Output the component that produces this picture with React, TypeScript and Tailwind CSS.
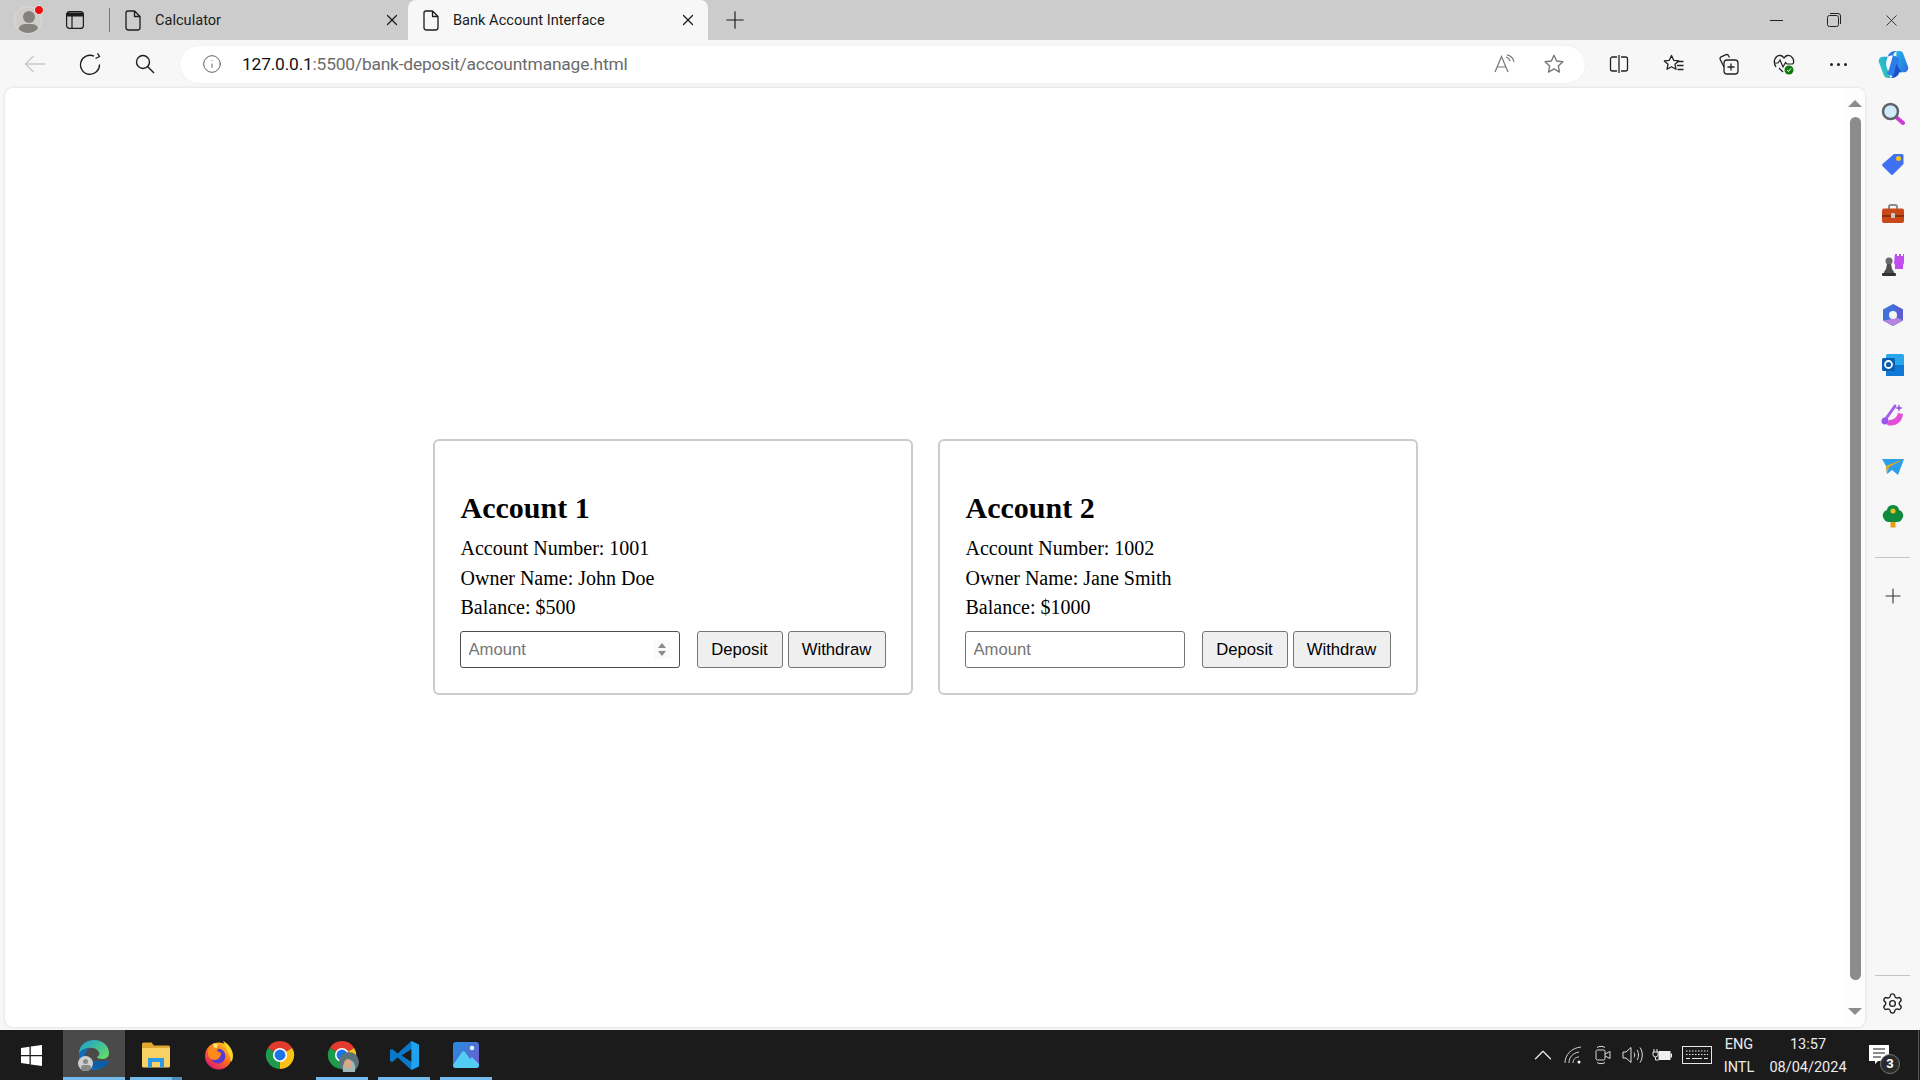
import { ChevronUp, Info, Plus, Settings, X } from 'lucide-react'
import type { ReactNode } from 'react'

const uiFont = 'font-["Roboto","Noto_Sans",sans-serif]'

function PageIcon() {
  return (
    <svg width="16" height="21" viewBox="0 0 16 21" fill="none" stroke="#1c1c1c" strokeWidth="1.3">
      <path d="M3 1h6.500L15 6.500V17.500a2.500 2.500 0 0 1-2.500 2.500h-9A2.500 2.500 0 0 1 1 17.500V3a2 2 0 0 1 2-2zM9.500 1v5.500H15" strokeLinejoin="round" />
    </svg>
  )
}

function Avatar() {
  return (
    <div className="relative h-[28px] w-[28px] overflow-hidden rounded-full border border-[#dedcd8] bg-[#cfcdc9]">
      <div className="absolute left-[7.500px] top-[4px] h-[12px] w-[12px] rounded-full bg-[#85827e]" />
      <div className="absolute left-[3px] top-[17px] h-[14px] w-[21px] rounded-full bg-[#85827e]" />
    </div>
  )
}

function TitleBar() {
  return (
    <div className={`flex h-10 shrink-0 items-stretch bg-[#cccccc] text-[14.600px] text-[#1c1c1c] ${uiFont}`}>
      <div className="relative flex w-[56px] items-center justify-center">
        <Avatar />
        <div className="absolute left-[34px] top-[5px] h-[10px] w-[10px] rounded-full border border-[#e8e8e8] bg-[#e81010]" />
      </div>
      <div className="flex w-[38px] items-center justify-center">
        <svg width="18" height="18" viewBox="0 0 18 18" fill="none" stroke="#1c1c1c" strokeWidth="1.200">
          <rect x="0.600" y="0.600" width="16.800" height="16.800" rx="3" />
          <path d="M1 3.500h16" strokeWidth="4" />
          <path d="M6 5v12.500" />
        </svg>
      </div>
      <div className="my-[8px] ml-[15px] w-px bg-[#777]" />
      <div className="flex w-[298px] items-center pl-[15px]">
        <PageIcon />
        <span className="ml-[14px] flex-1 pt-[1px]">Calculator</span>
        <X size={18} strokeWidth={1.600} className="mr-[7px] text-[#1c1c1c]" />
      </div>
      <div className="flex w-[300px] items-center rounded-t-lg bg-[#f7f7f7] pl-[15px]">
        <PageIcon />
        <span className="ml-[14px] flex-1 pt-[1px]">Bank Account Interface</span>
        <X size={18} strokeWidth={1.600} className="mr-[11px] text-[#1c1c1c]" />
      </div>
      <div className="flex w-[54px] items-center justify-center">
        <Plus size={28} strokeWidth={1} className="text-[#1c1c1c]" />
      </div>
      <div className="ml-auto flex items-center">
        <div className="flex w-[56px] justify-center pr-[2px]">
          <div className="h-px w-[13px] bg-[#222]" />
        </div>
        <div className="flex w-[57px] justify-center">
          <svg width="14" height="14" viewBox="0 0 14 14" fill="none" stroke="#222" strokeWidth="1">
            <rect x="0.500" y="2.500" width="11" height="11" rx="2" />
            <path d="M3 .5h8a2.500 2.500 0 0 1 2.500 2.500v8" />
          </svg>
        </div>
        <div className="flex w-[58px] justify-center">
          <X size={19} strokeWidth={1.100} className="text-[#222]" />
        </div>
      </div>
    </div>
  )
}

function ToolButton({ children }: { children: ReactNode }) {
  return <div className="flex w-[55px] shrink-0 items-center justify-center">{children}</div>
}

function Toolbar() {
  return (
    <div className={`flex h-12 shrink-0 items-center bg-[#f7f7f7] pl-[7px] ${uiFont}`}>
      <div className="flex h-full w-[165px] items-stretch">
        <div className="flex w-[55px] items-center justify-center">
          <svg width="22" height="18" viewBox="0 0 22 18" fill="none" stroke="#c8c8c8" strokeWidth="1.300">
            <path d="M21 9H1.500M9.500 1l-8 8 8 8" />
          </svg>
        </div>
        <div className="flex w-[55px] items-center justify-center">
          <svg width="22" height="22" viewBox="0 0 22 22" fill="none" stroke="#1c1c1c" strokeWidth="1.300">
            <path d="M15 3.200A9.500 9.500 0 1 0 20.500 11.500" />
            <path d="M14 .8 16 4l-4 2" transform="translate(4.500 -0.500)" />
          </svg>
        </div>
        <div className="flex w-[55px] items-center justify-center">
          <svg width="20" height="20" viewBox="0 0 20 20" fill="none" stroke="#1c1c1c" strokeWidth="1.400">
            <circle cx="8" cy="8" r="6.500" />
            <path d="m12.500 12.500 6.500 6.500" />
          </svg>
        </div>
      </div>
      <div className="ml-2 flex h-[37px] flex-1 items-center rounded-full bg-white pl-[22px] pr-[20px] shadow-[0_0_2px_rgba(0,0,0,0.08)]">
        <Info size={20} strokeWidth={1.100} className="text-[#555]" />
        <span className="ml-[20px] pt-[1px] text-[17.400px] tracking-[-0.2px] text-[#6b6b6b]">
          <span className="text-[#111]">127.0.0.1</span>:5500/bank-deposit/accountmanage.html
        </span>
        <div className="ml-auto flex items-center gap-[27px]">
          <svg width="22" height="20" viewBox="0 0 22 20" fill="none" stroke="#767676" strokeWidth="1.200">
            <path d="M1 18 7.500 2.500 14 18M3.300 13h8.400" />
            <path d="M12 3a6 6 0 0 1 4 4M13 .8a9 9 0 0 1 7 7" />
          </svg>
          <svg width="22" height="22" viewBox="0 0 24 24" fill="none" stroke="#767676" strokeWidth="1.500" strokeLinejoin="round">
            <path d="m12 2.500 2.900 6.200 6.800.8-5 4.600 1.300 6.700-6-3.400-6 3.400 1.300-6.700-5-4.600 6.800-.8z" />
          </svg>
        </div>
      </div>
      <div className="ml-[6px] flex h-full w-[329px] shrink-0 items-stretch">
        <ToolButton>
          <svg width="20" height="20" viewBox="0 0 20 20" fill="none" stroke="#222" strokeWidth="1.300">
            <path d="M8 3H3.500A2 2 0 0 0 1.500 5v10a2 2 0 0 0 2 2H8M12 3h4.500a2 2 0 0 1 2 2v10a2 2 0 0 1-2 2H12M10 1v18" />
          </svg>
        </ToolButton>
        <ToolButton>
          <svg width="22" height="22" viewBox="0 0 22 22" fill="none" stroke="#222" strokeWidth="1.300" strokeLinejoin="round">
            <path d="m8.500 2.500 2.200 4.800 5 .6-3.700 3.400 1 5-4.500-2.500-4.500 2.500 1-5L1.300 7.900l5-.6z" />
            <path d="M14 8.500h6.500M14 12.500h6.500M14.500 16.500h6" />
          </svg>
        </ToolButton>
        <ToolButton>
          <svg width="22" height="22" viewBox="0 0 22 22" fill="none" stroke="#222" strokeWidth="1.300" strokeLinejoin="round">
            <path d="M6 14 2.200 6.500a2 2 0 0 1 1-2.700L8 1.700a2 2 0 0 1 2.600 1l.9 1.800" />
            <rect x="6" y="7" width="14" height="14" rx="3" />
            <path d="M13 10.500v7M9.500 14h7" />
          </svg>
        </ToolButton>
        <ToolButton>
          <svg width="22" height="22" viewBox="0 0 22 22" fill="none">
            <path d="M3 14C-1 8 3 2 7.500 2.500 9 2.700 10 3.500 11 5c1-1.500 2-2.300 3.500-2.500C19 2 22 7 20 11" stroke="#222" strokeWidth="1.300" />
            <path d="M1 10h4l2-3 3 7 2.500-4.500 1.500 1.500h6M6 15l4 4" stroke="#222" strokeWidth="1.200" />
            <circle cx="16" cy="17" r="4.500" fill="#107c10" />
            <path d="m14 17 1.500 1.500 2.500-3" stroke="white" strokeWidth="1" />
          </svg>
        </ToolButton>
        <ToolButton>
          <div className="flex gap-[4px]">
            <div className="h-[3px] w-[3px] rounded-full bg-[#222]" />
            <div className="h-[3px] w-[3px] rounded-full bg-[#222]" />
            <div className="h-[3px] w-[3px] rounded-full bg-[#222]" />
          </div>
        </ToolButton>
        <ToolButton>
          <svg width="31" height="27" viewBox="0 0 32 28">
            <defs>
              <linearGradient id="cpA" x1="0" y1="0" x2="1" y2="1">
                <stop offset="0" stopColor="#1fb6e8" />
                <stop offset="1" stopColor="#2f6be0" />
              </linearGradient>
              <linearGradient id="cpB" x1="0" y1="1" x2="1" y2="0">
                <stop offset="0" stopColor="#37d6a8" />
                <stop offset="1" stopColor="#1f9fe8" />
              </linearGradient>
            </defs>
            <path d="M19 0h3c2 0 3.500 1 4.200 3L31 16c1 3-1 6-4 6h-5l-3-13z" fill="url(#cpA)" />
            <path d="M13 28h-3c-2 0-3.500-1-4.200-3L1 12C0 9 2 6 5 6h5c-2 5-2 8-1 11z" fill="url(#cpB)" />
            <path d="M10 6c1-4 4-6 9-6-2 1-3 3-4 6l-3 11c-.8 3-2 5-3 6 4 3 9 5 10-1l3-13C21 5 14 3 10 6z" fill="#2c7de6" />
            <path d="M22 22c-1 4-4 6-9 6 2-1 3-3 4-6l2-9 5 9z" fill="#1c50c8" />
          </svg>
        </ToolButton>
      </div>
    </div>
  )
}

function Spinner() {
  return (
    <div className="absolute right-[9px] top-[9px] flex h-[19px] w-[17px] flex-col items-center justify-center gap-[3px] bg-[#fafafa]">
      <div className="h-0 w-0 border-x-[4px] border-b-[5px] border-x-transparent border-b-[#8a8a8a]" />
      <div className="h-0 w-0 border-x-[4px] border-t-[5px] border-x-transparent border-t-[#8a8a8a]" />
    </div>
  )
}

interface AccountCardProps {
  title: string
  number: string
  owner: string
  balance: string
  focused?: boolean
}

function AccountCard({ title, number, owner, balance, focused }: AccountCardProps) {
  return (
    <div className="w-[480px] rounded-[6px] border-2 border-[#cccccc] p-[25px] font-['Liberation_Serif',serif] text-black">
      <h2 className="mb-[12px] ml-[1px] mt-[25px] text-[30px] font-bold leading-[34px]">{title}</h2>
      <p className="ml-[1px] text-[20px] leading-[23px]">Account Number: {number}</p>
      <p className="ml-[1px] mt-[7px] text-[20px] leading-[23px]">Owner Name: {owner}</p>
      <p className="ml-[1px] mt-[6px] text-[20px] leading-[23px]">Balance: {balance}</p>
      <div className="mt-[12px] flex h-[37px] font-['Liberation_Sans',sans-serif] text-[16.670px]">
        <div className="relative w-[220px]">
          <input
            placeholder="Amount"
            className={`h-full w-full rounded-[3px] border px-[8px] pt-[1px] outline-none placeholder:text-[#757575] ${focused ? 'border-[#4f4f4f]' : 'border-[#767676]'}`}
          />
          {focused && <Spinner />}
        </div>
        <button type="button" className="ml-[17px] w-[86px] rounded-[3px] border border-[#767676] bg-[#efefef]">
          Deposit
        </button>
        <button type="button" className="ml-[5px] w-[98px] rounded-[3px] border border-[#767676] bg-[#efefef]">
          Withdraw
        </button>
      </div>
    </div>
  )
}

function Scrollbar() {
  return (
    <div className="flex w-[20px] shrink-0 flex-col items-center bg-[#fdfdfd] py-[12px]">
      <div className="h-0 w-0 border-x-[7px] border-b-[7px] border-x-transparent border-b-[#8c8c8c]" />
      <div className="mt-[10px] w-[11px] flex-1 rounded-full bg-[#8c8c8c]" />
      <div className="mt-[28px] h-0 w-0 border-x-[7px] border-t-[7px] border-x-transparent border-t-[#8c8c8c]" />
    </div>
  )
}

const sidebarIcons: ReactNode[] = [
  <svg key="search" width="24" height="24" viewBox="0 0 24 24">
    <path d="m15 15 7 6" stroke="#c93ad8" strokeWidth="4" strokeLinecap="round" />
    <circle cx="9.500" cy="9.500" r="7.500" fill="#cfeaf8" stroke="#5f6368" strokeWidth="2.500" />
  </svg>,
  <svg key="tag" width="24" height="24" viewBox="0 0 24 24">
    <path d="M13 2h8a1.500 1.500 0 0 1 1.500 1.500V12L12 22.500a1.500 1.500 0 0 1-2 0L1.500 14a1.500 1.500 0 0 1 0-2z" fill="#3f6ff2" />
    <circle cx="17.500" cy="6.500" r="2.500" fill="#f5c518" />
  </svg>,
  <svg key="toolbox" width="24" height="24" viewBox="0 0 24 24">
    <path d="M8 7V4.500A1.500 1.500 0 0 1 9.500 3h5A1.500 1.500 0 0 1 16 4.500V7" fill="none" stroke="#8d8d8d" strokeWidth="2" />
    <rect x="1" y="6.500" width="22" height="14.500" rx="2" fill="#c8481a" />
    <rect x="1" y="13" width="22" height="2" fill="#8f2f0e" />
    <rect x="10" y="11" width="4" height="5" rx="1" fill="#c9c9c9" />
  </svg>,
  <svg key="chess" width="24" height="24" viewBox="0 0 24 24">
    <path d="M14 1h2v2h2V1h2v2h2V1h1v9l-1 2v4h-8v-4l-1-2z" fill="#bf4df0" />
    <circle cx="8" cy="8" r="3.500" fill="#6a6a6a" />
    <path d="M6 11h4l1 5 2 3v2H3v-2l2-3z" fill="#4f4f4f" />
    <rect x="1" y="20" width="14" height="3" rx="1" fill="#333" />
  </svg>,
  <svg key="m365" width="24" height="24" viewBox="0 0 24 24">
    <path d="M12 1 22 6.500v11L12 23 2 17.500v-11z" fill="#3f72d8" />
    <path d="M12 1 22 6.500v11l-6-3.500V9z" fill="#5b5fd0" />
    <path d="M2 17.500 12 23l10-5.500-7-3.500-4 2z" fill="#b583e0" />
    <circle cx="12" cy="12" r="4" fill="#f7f7f7" />
  </svg>,
  <svg key="outlook" width="24" height="24" viewBox="0 0 24 24">
    <rect x="5" y="1" width="18" height="22" rx="1.500" fill="#28a8ea" />
    <path d="M5 12h18v11H5z" fill="#0f78d4" />
    <rect x="1" y="5" width="13" height="13" rx="1.500" fill="#0a5fb4" />
    <circle cx="7.500" cy="11.500" r="3.500" fill="none" stroke="white" strokeWidth="1.800" />
  </svg>,
  <svg key="designer" width="24" height="24" viewBox="0 0 24 24">
    <path d="M14 3 4 17" stroke="#a45cec" strokeWidth="3" strokeLinecap="round" />
    <path d="M6 22c8 2 15-2 16-11l-5-1c-1 4-4 7-9 7z" fill="#e04fd4" />
    <circle cx="4" cy="18" r="3.500" fill="#9a55ea" />
    <path d="m18 1 1 3 3 1-3 1-1 3-1-3-3-1 3-1z" fill="#9a4fe8" />
  </svg>,
  <svg key="send" width="24" height="24" viewBox="0 0 24 24">
    <path d="M1 6h22L17 22l-6-5-5 4-1-8z" fill="#2c9fe8" />
    <path d="M5 13 23 6 8 14l-2 7z" fill="#f0a818" />
  </svg>,
  <svg key="tree" width="24" height="24" viewBox="0 0 24 24">
    <rect x="9.500" y="16" width="5" height="7.500" fill="#e8a010" />
    <path d="M12 1c4 0 6 3 6 5 3 1 5 4 4 7-1 3-3 5-6 5H8c-3 0-5-2-6-5-1-3 1-6 4-7 0-2 2-5 6-5z" fill="#108a3c" />
    <circle cx="12" cy="7" r="2.500" fill="#f0c020" />
  </svg>,
]

function Sidebar() {
  return (
    <div className="flex w-[55px] shrink-0 flex-col items-center pt-[1px]">
      <div className="flex w-full flex-col items-center">
        {sidebarIcons.map((icon, i) => (
          <div key={i} className="flex h-[50.200px] w-full items-center justify-center">
            {icon}
          </div>
        ))}
      </div>
      <div className="mt-[16px] h-px w-[35px] bg-[#c4c4c4]" />
      <Plus size={24} strokeWidth={1.100} className="mt-[26px] text-[#333]" />
      <div className="mt-auto h-px w-[35px] bg-[#c4c4c4]" />
      <Settings size={23} strokeWidth={1.400} className="mb-[15px] mt-[16px] text-[#1c1c1c]" />
    </div>
  )
}

function EdgeIcon() {
  return (
    <div className="relative h-[32px] w-[32px]">
      <svg width="32" height="32" viewBox="0 0 32 32">
        <defs>
          <linearGradient id="edgeTop" x1="0" y1="0" x2="1" y2="0.800">
            <stop offset="0" stopColor="#1a9ad8" />
            <stop offset="1" stopColor="#62dc68" />
          </linearGradient>
        </defs>
        <path d="M1 15C1 6 8 1 16 1c9 0 15 6 15 13 0 4-3 6-7 6-3 0-5-1-5-2 2-1 3-3 2-5-2-4-7-5-11-4-5 1-8 3-9 6z" fill="url(#edgeTop)" />
        <path d="M1 15c1-3 4-5 9-6 1 0 2 0 2 0-4 2-6 6-5 10s5 8 10 10c3 1 6 0 9-2-3 3-7 4-10 4C7 31 1 24 1 15z" fill="#0f6cbd" />
        <path d="M17 29c-3-1-6-4-7-7h21c-1 4-6 9-14 7z" fill="#0b5fa8" />
      </svg>
      <div className="absolute bottom-0 left-0 h-[15px] w-[15px] overflow-hidden rounded-full bg-[#cfcfcf]">
        <div className="mx-auto mt-[3px] h-[5px] w-[5px] rounded-full bg-[#888]" />
        <div className="mx-auto mt-[1px] h-[6px] w-[10px] rounded-full bg-[#888]" />
      </div>
    </div>
  )
}

function FolderIcon() {
  return (
    <svg width="28" height="26" viewBox="0 0 28 26">
      <path d="M0 2A1.500 1.500 0 0 1 1.500 .5h8L12 3.500h14.500A1.500 1.500 0 0 1 28 5v3H0z" fill="#e0a82e" />
      <path d="M0 6h28v18a1.500 1.500 0 0 1-1.500 1.500h-25A1.500 1.500 0 0 1 0 24z" fill="#fad165" />
      <path d="M6 16h16v9.500h-4V20h-8v5.500H6z" fill="#2e9be8" />
    </svg>
  )
}

function FirefoxIcon() {
  return (
    <svg width="29" height="30" viewBox="0 0 29 30">
      <defs>
        <linearGradient id="ffA" x1="0.800" y1="0.100" x2="0.200" y2="0.900">
          <stop offset="0" stopColor="#ffc21e" />
          <stop offset="0.500" stopColor="#ff6a1f" />
          <stop offset="1" stopColor="#e0206a" />
        </linearGradient>
      </defs>
      <circle cx="14.500" cy="16" r="13.500" fill="url(#ffA)" />
      <path d="M19 1c6 3 10 9 10 15 0 2-.5 4-1.500 6-2-7-5-14-8.500-21z" fill="#ffd52e" />
      <circle cx="14" cy="16" r="7.500" fill="#5a3bd0" />
      <path d="M6 6c4-3 9-1 10 2-1 1-3 1-3 3l4 2c0 4-3 7-6 7-5 0-7-3-7-7 0-3 0-5 2-7z" fill="#ff8a1c" />
      <path d="M9 3.500 14 4l-1 4-3-.5z" fill="#ffe27a" />
    </svg>
  )
}

function ChromeIcon() {
  return (
    <svg width="30" height="30" viewBox="0 0 32 32">
      <path d="M16 16 3 8.500A15 15 0 0 1 29 8.500z" fill="#e33b2e" />
      <path d="M16 16 29 8.500A15 15 0 0 1 16 31z" fill="#fbc116" />
      <path d="M16 16 16 31A15 15 0 0 1 3 8.500z" fill="#1f9a4c" />
      <circle cx="16" cy="16" r="7.500" fill="white" />
      <circle cx="16" cy="16" r="5.800" fill="#1a73e8" />
    </svg>
  )
}

function ProfileChrome() {
  return (
    <div className="relative h-[30px] w-[30px]">
      <ChromeIcon />
      <svg width="20" height="20" viewBox="0 0 20 20" className="absolute -bottom-[2px] -right-[2px]">
        <circle cx="10" cy="10" r="10" fill="#5a7378" />
        <path d="M4 20c-1-7 1-12 6-12s7 5 6 12z" fill="#9fb8ba" />
        <ellipse cx="9" cy="12" rx="4" ry="5" fill="#d8a78c" />
      </svg>
    </div>
  )
}

function VscodeIcon() {
  return (
    <svg width="31" height="31" viewBox="0 0 32 32">
      <path d="M23 1 31 5v22l-8 4L9 18l-6 5-2-1.500V10.500L3 9l6 5z" fill="#0a78c8" />
      <path d="M23 1 31 5v22l-8 4z" fill="#20a2ee" />
      <path d="M23 9.500 13 16l10 6.500z" fill="#1c1c1c" />
    </svg>
  )
}

function PhotosIcon() {
  return (
    <svg width="26" height="26" viewBox="0 0 26 26">
      <defs>
        <linearGradient id="phA" x1="0" y1="0" x2="1" y2="1">
          <stop offset="0" stopColor="#1f8fe0" />
          <stop offset="1" stopColor="#7a55c8" />
        </linearGradient>
      </defs>
      <rect width="26" height="26" rx="3" fill="url(#phA)" />
      <circle cx="19" cy="6" r="2.200" fill="#eaf6ff" />
      <path d="M0 23 9 10c1-1 2-1 3 0l5 7 2-2 7 7v1a3 3 0 0 1-3 3H3a3 3 0 0 1-3-3z" fill="#52cdf5" />
    </svg>
  )
}

interface TaskTileProps {
  children: ReactNode
  running?: boolean
  active?: boolean
  stacked?: boolean
}

function TaskTile({ children, running, active, stacked }: TaskTileProps) {
  return (
    <div className={`flex w-[62px] flex-col ${active ? 'bg-[#4a4a4a]' : ''}`}>
      <div className="flex flex-1 items-center justify-center pt-[3px]">{children}</div>
      <div className={`flex h-[3px] justify-end ${active ? 'bg-[#76b9ed]' : running ? 'mx-[5px] bg-[#76b9ed]' : ''}`}>
        {stacked && <div className="w-[10px] bg-[#4c8dbe]" />}
      </div>
    </div>
  )
}

function TrayIcons() {
  return (
    <>
      <div className="flex w-[31px] justify-center">
        <ChevronUp size={30} strokeWidth={1} className="text-[#e8e8e8]" />
      </div>
      <div className="flex w-[30px] justify-center">
        <svg width="18" height="18" viewBox="0 0 18 18" fill="none" stroke="#cfcfcf" strokeWidth="1">
          <path d="M1 17C1 9 7 2 17 1M5 17c0-6 4-10 10-11M9 17c0-3 2-6 6-6" />
          <circle cx="15" cy="16" r="1.500" fill="white" stroke="none" />
        </svg>
      </div>
      <div className="flex w-[30px] justify-center">
        <svg width="16" height="20" viewBox="0 0 16 20" fill="none" stroke="#dcdcdc" strokeWidth="1">
          <rect x="1" y="5" width="9" height="10" rx="1.500" />
          <path d="m10 9 5-2.500v7L10 11M2 2.500c2-1.500 6-1.500 8 0M2 17.500c2 1.500 6 1.500 8 0" />
        </svg>
      </div>
      <div className="flex w-[29px] justify-center">
        <svg width="21" height="18" viewBox="0 0 21 18" fill="none" stroke="#e0e0e0" strokeWidth="1">
          <path d="M1 6h3l5-4.500v15L4 12H1zM12 6.500c1 1.500 1 3.500 0 5M15 4c2 3 2 7 0 10M18 1.500c3 4 3 11 0 15" />
        </svg>
      </div>
      <div className="flex w-[30px] justify-center">
        <svg width="20" height="14" viewBox="0 0 20 14">
          <path d="M2 1v3M5 1v3M1 4h5v2.500a2.500 2.500 0 0 1-5 0zM3.500 9v3h3" fill="none" stroke="#f0f0f0" strokeWidth="1" />
          <rect x="6.500" y="3" width="12" height="9" fill="#f0f0f0" />
          <rect x="18.500" y="5.500" width="1.500" height="4" fill="#f0f0f0" />
        </svg>
      </div>
      <div className="flex w-[40px] justify-center">
        <svg width="30" height="18" viewBox="0 0 30 18" fill="none" stroke="#e8e8e8">
          <rect x="0.500" y="0.500" width="29" height="17" />
          <path d="M4 5h22M4 8.500h22" strokeDasharray="1.500 1.500" />
          <path d="M4 12.500h4M10 12.500h10M22 12.500h4" />
        </svg>
      </div>
    </>
  )
}

function Taskbar() {
  return (
    <div className={`flex h-[50px] shrink-0 items-stretch bg-[#1b1b1b] text-[14.500px] text-[#ececec] ${uiFont}`}>
      <div className="flex w-[63px] shrink-0 items-center justify-center">
        <svg width="21" height="21" viewBox="0 0 21 21" fill="white" className="mt-[1px]">
          <path d="M0 3 8.500 1.800V10H0zM9.800 1.600 21 0v10H9.800zM0 11.200h8.500v8L0 18zM9.800 11.200H21V21L9.800 19.400z" />
        </svg>
      </div>
      <TaskTile active running>
        <EdgeIcon />
      </TaskTile>
      <TaskTile running stacked>
        <FolderIcon />
      </TaskTile>
      <TaskTile>
        <FirefoxIcon />
      </TaskTile>
      <TaskTile>
        <ChromeIcon />
      </TaskTile>
      <TaskTile running>
        <ProfileChrome />
      </TaskTile>
      <TaskTile running>
        <VscodeIcon />
      </TaskTile>
      <TaskTile running>
        <PhotosIcon />
      </TaskTile>
      <div className="ml-auto flex items-center">
        <TrayIcons />
        <div className="flex w-[44px] flex-col items-center pt-[2px] leading-[23px]">
          <span>ENG</span>
          <span>INTL</span>
        </div>
        <div className="flex w-[94px] flex-col items-center pt-[1px] leading-[23px]">
          <span>13:57</span>
          <span>08/04/2024</span>
        </div>
        <div className="relative flex h-full w-[65px] items-center pl-[14px]">
          <svg width="20" height="20" viewBox="0 0 20 20">
            <path d="M0 0h20v16H9l-3 3v-3H0z" fill="white" />
            <path d="M4 4h12M4 8h12M4 12h8" stroke="#1b1b1b" strokeWidth="1" />
          </svg>
          <div className="absolute left-[25px] top-[24px] flex h-[20px] w-[20px] items-center justify-center rounded-full border border-[#777] bg-[#2a2a2a] text-[13px] font-bold text-white">
            3
          </div>
          <div className="absolute bottom-0 right-[1px] top-0 w-px bg-[#555]" />
        </div>
      </div>
    </div>
  )
}

export default function App() {
  return (
    <div className="flex h-screen w-screen flex-col overflow-hidden bg-[#f7f7f7]">
      <TitleBar />
      <Toolbar />
      <div className="flex min-h-0 flex-1">
        <div className="mb-[3px] ml-[5px] flex flex-1 overflow-hidden rounded-lg bg-white shadow-[0_0_3px_rgba(0,0,0,0.15)]">
          <main className="flex flex-1 items-center justify-center gap-[25px] pt-[18px]">
            <AccountCard title="Account 1" number="1001" owner="John Doe" balance="$500" focused />
            <AccountCard title="Account 2" number="1002" owner="Jane Smith" balance="$1000" />
          </main>
          <Scrollbar />
        </div>
        <Sidebar />
      </div>
      <Taskbar />
    </div>
  )
}
